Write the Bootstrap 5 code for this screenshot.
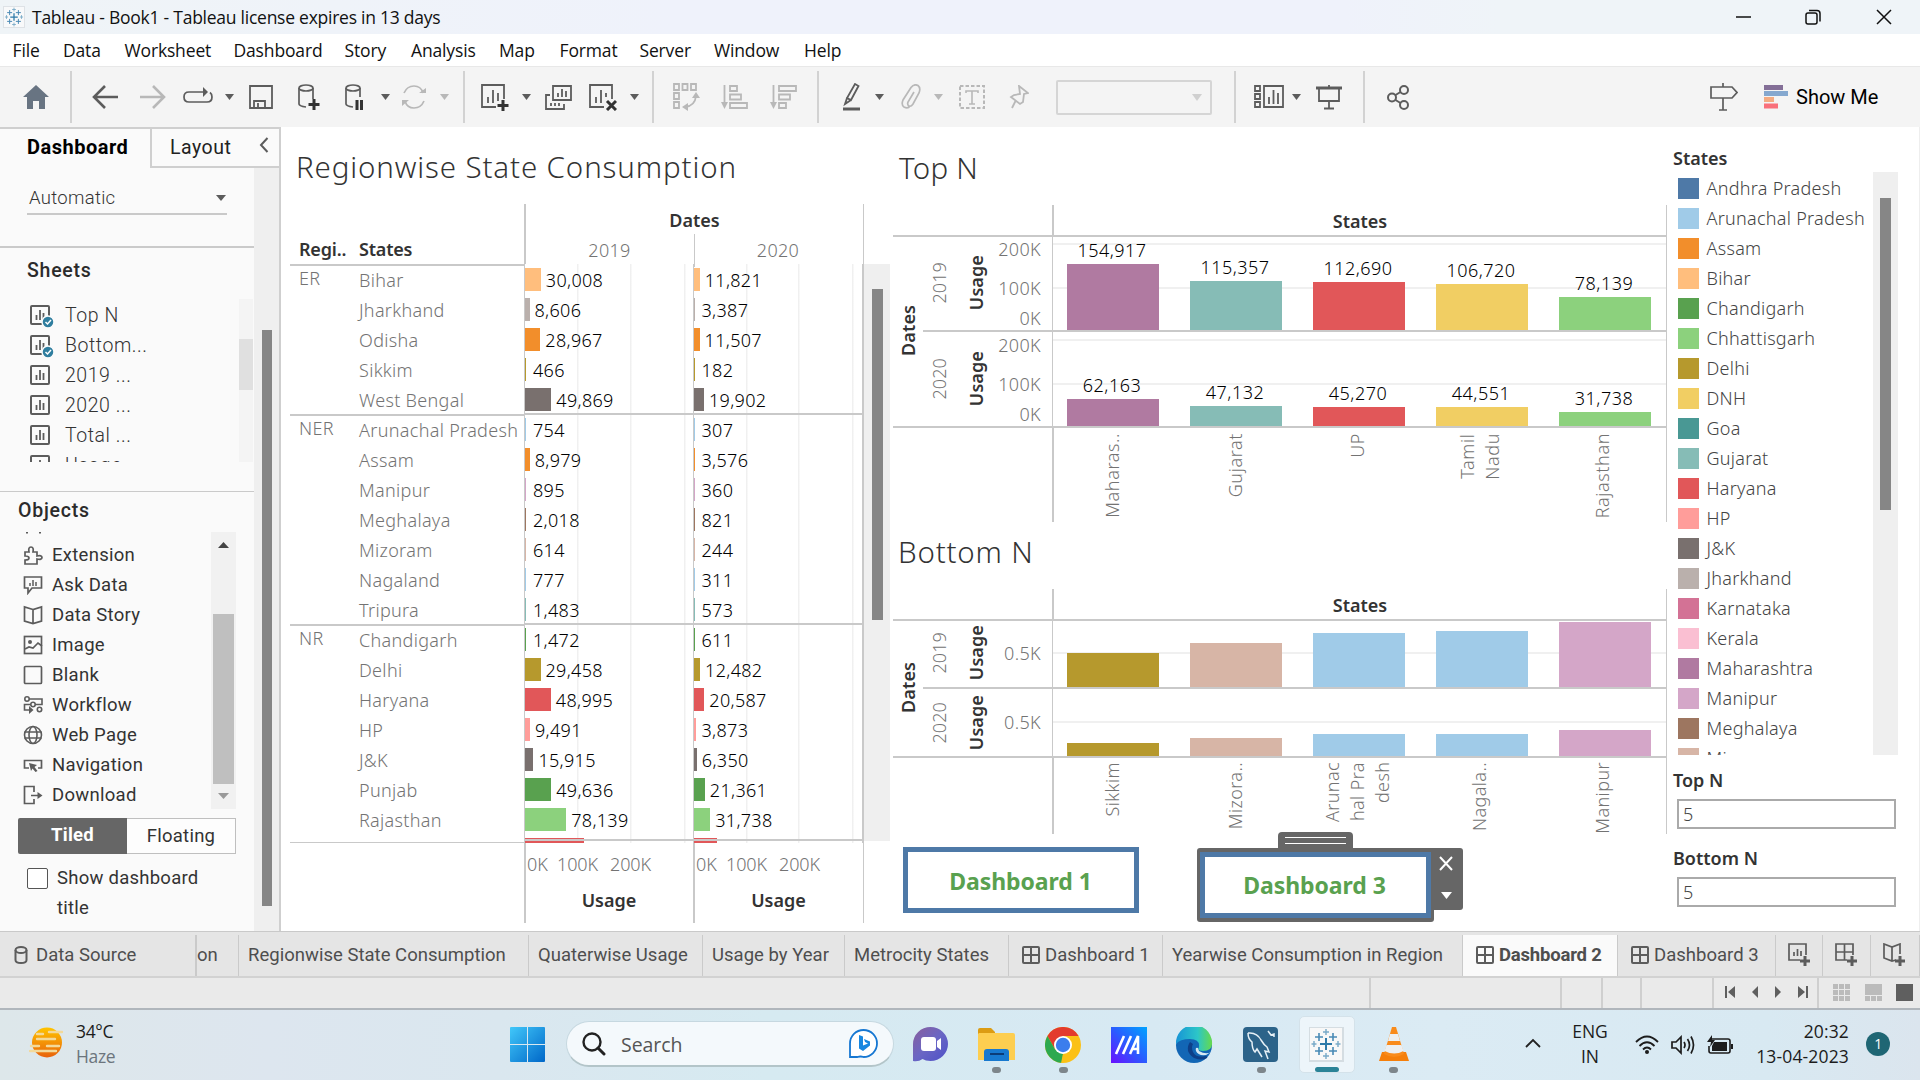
<!DOCTYPE html>
<html lang="en">
<head>
<meta charset="utf-8">
<title>Tableau - Book1</title>
<link rel="stylesheet" href="https://cdn.jsdelivr.net/npm/bootstrap@5.3.0/dist/css/bootstrap.min.css">
<script src="https://cdn.jsdelivr.net/npm/bootstrap@5.3.0/dist/js/bootstrap.bundle.min.js"></script>
<style>
:root{--ln:#c9c9c9;--ink:#333;--dim:#737373;--ic:#5c5c5c;--off:#b8b8b8}
body{width:1920px;height:1080px;overflow:hidden;font-family:"Noto Sans","Open Sans",sans-serif;font-size:18px;line-height:30px;color:var(--ink);background:#fff}
svg{display:block;fill:none;stroke:var(--ic);stroke-width:2}
b{font-weight:600}
.segoe{font-family:"Open Sans",sans-serif}
.benton{font-family:Roboto,sans-serif}
.titlebar{height:34px;background:linear-gradient(90deg,#eff4f7,#eff2fb 35%,#eff2fb 70%,#eff4f8 78%);color:#111;padding-left:3px}
.titlebar span{font-size:17.5px;letter-spacing:-.25px;margin-left:-1px}
.win{display:grid;grid-template-columns:69px 71px 44px;margin-left:auto}
.win svg{stroke:#111;stroke-width:1.5}
.menus{height:32px;display:grid;grid-template-columns:50.5px 61.5px 109px 111px 66.5px 88px 60.5px 80px 74.5px 90px 60px;padding-left:12.5px;color:#111;font-size:17.5px;letter-spacing:-.15px;line-height:33px}
.tools{height:61px;background:#f4f4f4;border-top:1px solid #e8e8e8;display:grid;padding-left:23px;
grid-template-columns:48px 21px 48px 43px 42px 24px 49px 47px 36px 20px 39px 24px 17px 41px 23px 44px 41px 23px 20px 48px 49px 48px 25px 32px 26px 33px 25px 50px 47px 179px 19px 38px 24px 48px 23px 323px 54px 32px 90px;align-items:center}
.tools svg{flex:none}
.tools i.sep{width:2px;height:52px;background:#d2d2d2;margin-left:-1px}
.tools .off{stroke:var(--off)}
.tools .fillc{fill:var(--ic);stroke:none}.tools .fillo{fill:var(--off);stroke:none}
.combo{width:156px;height:35px;border:2px solid #d5d5d5;border-radius:2px}
#showme{font-size:20px;letter-spacing:0}
.workspace{height:804px}
/* side pane */
.side{width:281px;background:#fafafa;border-top:2px solid #cfcfcf;border-right:2px solid #cfcfcf}
.stabs{height:39px;line-height:36px}
.stabs .on{width:150px;padding-left:27px;color:#000;font-weight:700;font-size:20px;letter-spacing:.5px;line-height:37px}
.stabs .off2{width:129px;border-left:2px solid #cfcfcf;border-bottom:2px solid #cfcfcf;padding-left:18px;color:#222;font-size:19.5px;letter-spacing:.5px;line-height:38px}
#sidebody{height:763px}
.scol{width:254px}
.outerbar{width:25px;background:#efefef;padding-top:162px}
.outerbar div{width:10px;height:576px;background:#868686;margin-left:8px}
.sizebox{width:200px;height:38px;margin:9px 0 0 27px;border-bottom:2px solid #c9c9c9;padding:6px 0 0 2px;font-size:18.5px;font-weight:300;letter-spacing:.3px}
.sizebox svg{margin-right:1px}
.sec1{height:246px;margin-top:31px;border-top:2px solid #cacaca;border-bottom:1px solid #cacaca}
.sec1 h6,.sec2 h6{font-size:19.5px;font-weight:500;letter-spacing:.75px;line-height:30px;color:#2b2b2b;margin:0}
.sec1 h6{padding:8px 0 0 27px}
.sheets{height:163px;margin-top:13px;overflow:hidden}
.sheets .it{height:30px;padding-left:30px;gap:10px;font-size:19.5px;font-weight:300;letter-spacing:.55px;position:relative;top:1px}
.sheets .it span{margin-top:2px}
.sheets .trk{width:14px;margin-right:1px;background:#f4f4f4;padding-top:40px}
.sheets .trk div{height:51px;background:#e0e0e0}
.sec2 h6{padding:4px 0 0 18px}
.objs{height:277px;margin-top:6px}
.objs .it{height:30px;padding-left:23px;gap:9px;font-size:18.5px;letter-spacing:.28px;position:relative;top:1px}
.objs .it svg,.sheets .it svg{flex:none}
.objs .trk{width:25px;margin-right:18px;background:#f1f1f1}
.objs .trk .th{width:21px;height:170px;background:#bfbfbf;margin:0 2px}
.seg{width:218px;height:36px;margin:9px 0 0 18px;line-height:35px;font-size:18.5px;letter-spacing:.25px;border-radius:2px}
.seg .a{width:109px;background:#666;color:#fff;font-weight:700;border-radius:2px 0 0 2px}
.seg .b{width:109px;border:1px solid #bfbfbf;border-left:0;background:#fdfdfd}
.chk{margin:9px 0 0 27px;gap:9px;font-size:18.5px;letter-spacing:.25px}
.chk .bx{width:21px;height:21px;border:1.5px solid #555;border-radius:2px;background:#fff;margin-top:5px}
/* text table */
.tv{width:610px;padding-left:9px}
.ttl{font-size:29.5px;font-weight:300;line-height:40px;letter-spacing:.87px}
.tv .ttl{padding:20px 0 0 6px;height:77px}
.thead1{height:60px}
.thead1 .l{width:234px;padding:30px 0 0 9px}
.thead1 .l b{display:inline-block;width:60px;font-weight:600;letter-spacing:-.2px}
.thead1 .r{width:340px;border-left:2px solid var(--ln);border-right:1px solid var(--ln)}
#dh{line-height:32px;height:30px}
.yr{color:var(--dim);font-weight:300;width:168px;text-align:center;line-height:33px;letter-spacing:.3px;padding-right:1px}
.yr+.yr{border-left:1px solid var(--ln)}
.tbody1{height:579px;width:574px;overflow:hidden;position:relative}
.tbody1 .rw{height:30px;line-height:32px}
.tbody1 .l{width:234px;padding-left:9px;color:var(--dim);font-weight:300;letter-spacing:.32px}
.tbody1 .l span{display:inline-block;width:60px}
.tbody1 .l span.rg{position:relative;top:-2px}
.rw.first .l{border-top:2px solid var(--ln);line-height:29px}
.pn{width:168.5px;padding-top:4px;border-left:1px solid var(--ln);color:#000;letter-spacing:.32px;font-weight:300;line-height:25px;background:linear-gradient(#f0f0f0,#f0f0f0) 52px 0/1.5px 100% no-repeat,linear-gradient(#f0f0f0,#f0f0f0) 104.5px 0/1.5px 100% no-repeat,linear-gradient(#f0f0f0,#f0f0f0) 158.5px 0/1.5px 100% no-repeat}
.pn:last-child{width:171.5px;border-right:2px solid var(--ln)}
.pn i{height:23px;flex:none}
.rw.first .pn{border-top:2px solid var(--ln);margin-top:-1px;padding-top:3px;height:31px}
.rw.r0 .pn{border-top-width:1px;padding-top:4px}
.endline{position:absolute;left:234px;right:0;top:575px;height:2px;background:var(--ln)}
.tfoot1{height:80px;width:574px}
.tfoot1 .l{width:234px;border-top:1px solid var(--ln);margin-top:-1px}
.tfoot1 .ax{width:169px;border-left:2px solid var(--ln)}
.tfoot1 .ax:last-child{width:171px;border-right:1px solid var(--ln)}
.tfoot1 .tk{color:var(--dim);font-weight:300;padding:6px 0 0 1px;letter-spacing:-.1px}
.tfoot1 .tk span{display:inline-block}
.tfoot1 .tk span:nth-child(1){width:30px}.tfoot1 .tk span:nth-child(2){width:53px}
.usg{margin-top:6px;line-height:30px;padding-right:1px}
.tvbar{width:26px;height:577px;margin-top:137px;background:#efefef;padding:25px 0 0 8px}
.tvbar div{width:11px;height:331px;background:#868686}
/* bar views */
.bv{width:776px;padding-left:2px}
.bv .ttl{height:78px;padding:21px 0 0 6px;letter-spacing:.2px}
.bv .botn .ttl{letter-spacing:.8px;padding-left:5px}
.bgrid{display:grid;grid-template-columns:30px 33px 42px 54px 615px;width:774px}
.vt{writing-mode:vertical-rl;transform:rotate(180deg);text-align:center;line-height:1.25;letter-spacing:.1px}
.bgrid .ctr{display:flex;align-items:center;justify-content:center}
.bgrid .hl{box-shadow:0 2px 0 var(--ln)}
.bgrid .dts{grid-row:2/4;grid-column:1}
.bgrid .yy{grid-column:2;color:var(--dim);font-weight:300}
.bgrid .us{padding-right:2px}
.bgrid .foot4{grid-column:1/5}
.bgrid .axl{grid-column:4}.bgrid .plot{grid-column:5}
.topn{height:384px}.botn{height:324px}
.sthead{border-left:2px solid var(--ln);border-right:1px solid var(--ln);height:30px;text-align:center;line-height:33px}
.plot{position:relative;border:1px solid var(--ln);border-bottom:2px solid var(--ln);border-top:0;display:flex;align-items:flex-end}
.plot.p1{border-top:2px solid var(--ln)}
.plot .gl{position:absolute;left:0;right:0;height:2px;background:#f0f0f0}
.plot .cl{width:123px;flex:none;padding-left:14px;z-index:1;font-weight:300;color:#000}
.plot .cl:last-of-type{width:120px}
.plot .cl span{display:block;width:92px;text-align:center;line-height:24px;letter-spacing:.5px;font-size:18px;margin-bottom:2px;position:relative;left:-1px;white-space:nowrap}
.plot .cl i{display:block;width:92px}
.axl{position:relative;color:var(--dim);font-weight:300;text-align:right;letter-spacing:.35px}
.axl span{position:absolute;right:11px;line-height:20px}
.lnb{border-bottom:2px solid var(--ln)}
.cats{border-left:2px solid var(--ln);border-right:1px solid var(--ln);display:flex;color:var(--dim)}
.cats div{width:123px;display:flex;justify-content:center;font-weight:300;padding-right:5px}
.cats .vt{text-align:end;line-height:25px;letter-spacing:.6px;margin-top:5px;align-self:flex-start}
.botn .cats .vt{letter-spacing:.4px;margin-top:4px}
.btns{padding:12px 0 0 10px}
.nav1{width:236px;height:66px;border:5px solid #4e79a7;background:#fff;color:#59a14f;font-weight:700;font-size:23px;text-align:center;line-height:58px;letter-spacing:-.05px;padding-right:1px}
.selwrap{position:relative;width:237px;height:74px;background:#666;padding:4px 3px;border-radius:3px;margin:1px 0 0 58px}
.selwrap .nav1{width:231px;line-height:56px;padding-right:2px}
.grip{position:absolute;left:81px;top:-16px;width:75px;height:17px;background:#666;border-radius:4px 4px 0 0;padding:5px 7px}
.grip div{height:7px;border-top:1.5px solid #fff;border-bottom:1.5px solid #fff}
.selmenu{position:absolute;left:234px;top:0;width:32px;height:62px;background:#666;border-radius:0 3px 3px 0;padding-left:6px}
/* legend */
.lg{width:250px;padding:16px 0 0 6px;border-right:1px solid #eee}
.lgl{height:583px;margin-top:-1px;overflow:hidden}
.lgl .it{height:30px;gap:8px;padding-left:5px;color:#444;letter-spacing:.27px;font-weight:300;line-height:30px;position:relative;top:1px;left:-.5px}
.lgl .it i{width:21px;height:21px}
.lgl .trk{width:25px;background:#efefef;margin-right:21px;padding:26px 0 0 7px}
.lgl .trk div{width:11px;height:312px;background:#868686}
.parh{height:44px;line-height:50px}.parh2{margin-top:4px}
.par{width:219px;height:30px;margin-left:4px;border:2px solid #aaa;padding-left:4px;line-height:26px;color:#444;font-weight:300}
/* sheet tabs */
.shtabs{height:45px;border-top:1px solid #c9c9c9;background:#e5e5e5;display:grid;grid-template-columns:197px 42px 290px 174px 142px 164px 154px 300px 155px 158px 47px 48px 49px;color:#4e4e4e;font-size:18.5px;letter-spacing:.02px}
.shtabs>div{border-right:1px solid #cacaca;padding-left:9px;display:flex;align-items:center;gap:5px;white-space:nowrap;margin-top:3px;line-height:38px;padding-bottom:2px}
.shtabs>div.act{background:#fafafa;font-weight:700;letter-spacing:-.2px}
.shtabs svg{flex:none}
.shtabs>.ds{padding-left:14px;gap:8px;border-right-width:2px}
.shtabs>.dsh{padding-left:13px}.shtabs>.nw{padding-left:12px}
.stat{height:34px;background:#eaeaea;border-top:2px solid #d2d2d2;border-bottom:2px solid #b0b6bc;display:grid;grid-template-columns:1371px 191px 41px 39px 72px 105px 101px}
.stat>div{border-right:2px solid #cfcfcf;padding-bottom:2px}.stat svg{fill:#5f5f5f;stroke:none}
.stat .views{padding:0 7px 2px 14px}
.task{height:70px;background:linear-gradient(90deg,#dde7ea,#dde6ef 14%,#dae7ef 26%,#d6eaf1 40%,#d7e9f3 60%,#dbebf4 75%,#d8e9f2 92%,#dbe5ee);display:grid;grid-template-columns:47px 434px 56px 347px 65px 67px 66px 65px 67px 66px 66px 150px 47px 63px 36px 36px 36px 123px 50px;padding-left:29px;color:#1c1c1c;line-height:25px;font-size:17.5px;letter-spacing:-.35px}
.task>div{position:relative;padding-top:17px}
.srch{width:328px;height:46px;margin-top:-6px;border-radius:23px;background:#f4f9fc;border:1px solid #c6d8e0;border-bottom:2px solid #b3c5c9;padding:0 14px 0 15px;font-size:19.5px;color:#555;letter-spacing:-.05px}
.srch span{margin-left:15px;padding-top:1px}
.task .dot{position:absolute;left:14px;top:57px;width:9px;height:6px;border-radius:3px;background:#7d868b}
.task svg{stroke:none}
.actv{position:absolute;left:-10px;top:6px;width:56px;height:57px;border-radius:5px;background:#edf5fa;border:1px solid #d4e2ea}
.actv::after{content:"";position:absolute;left:15px;bottom:0;width:24px;height:5px;border-radius:3px;background:#2a8397}
.task>.wx,.task>.lang,.task>.clock{padding-top:9px}
.task>.lang{text-align:center;margin-left:-12px;width:60px;letter-spacing:-.1px}
.task>.chv{padding-top:28px}
.task>.clock{margin-right:17px;letter-spacing:.15px}
.bdg{width:24px;height:24px;border-radius:50%;background:#1f6674;color:#fff;font-size:14px;text-align:center;line-height:24px;margin-top:5px}
</style>
</head>
<body class="d-flex flex-column">
<svg width="0" height="0" class="position-absolute">
<defs>
<symbol id="tabl" viewBox="0 0 32 32"><path d="M16 10v12M10 16h12" stroke="#2d79a8" stroke-width="2"/><path d="M9 5v8M5 9h8M23 5v8M19 9h8M9 19v8M5 23h8M23 19v8M19 23h8" stroke="#4a8ab5" stroke-width="1.6"/><path d="M16 1v6M13 4h6M16 25v6M13 28h6M4 13v6M1.500 16h5M28 13v6M25.500 16h5" stroke="#78a9c7" stroke-width="1.4"/></symbol>
<symbol id="sheet" viewBox="0 0 20 20"><rect x="1" y="1" width="18" height="18" rx="1"/><path d="M6.500 10v5M10 5v10M13.500 8v7" stroke-width="1.8"/></symbol>
<symbol id="dash" viewBox="0 0 18 18"><rect x="1" y="1" width="16" height="16" rx="1"/><path d="M9 1v16M1 9h16"/></symbol>
</defs></svg>

<header class="titlebar segoe d-flex align-items-center">
<svg width="22" height="22" class="me-2 bg-light border"><use href="#tabl"/></svg><span>Tableau - Book1 - Tableau license expires in 13 days</span>
<div class="win"><svg width="16" height="16"><path d="M0 8h15"/></svg><svg width="16" height="16"><rect x="1" y="4" width="11" height="11" rx="2"/><path d="M4 1.500h8q3 0 3 3v8"/></svg><svg width="16" height="16"><path d="M1 1l14 14M15 1L1 15"/></svg></div>
</header>
<nav class="menus segoe"><span>File</span><span>Data</span><span>Worksheet</span><span>Dashboard</span><span>Story</span><span>Analysis</span><span>Map</span><span>Format</span><span>Server</span><span>Window</span><span>Help</span></nav>

<div class="tools">
<svg width="26" height="24"><path d="M13 0L26 12h-4v12h-6v-8h-6v8H4V12H0z" fill="#687482" stroke="none"/></svg>
<i class="sep"></i>
<svg width="26" height="24"><path d="M26 12H2M13 1L2 12l11 11" stroke-width="2.600"/></svg>
<svg width="26" height="24" class="off"><path d="M0 12h24M13 1l11 11-11 11" stroke-width="2.600"/></svg>
<svg width="30" height="22"><path d="M23 6H6q-5 0-5 5t5 5h18q5 0 5-5 0-3-2-4.500" stroke-width="1.700"/><path d="M20 1l5 5-5 5z" class="fillc"/></svg>
<svg width="9" height="6"><path d="M0 0h9L4.500 6z" class="fillc"/></svg>
<svg width="24" height="24"><path d="M1 1h22v22H1zM5 23v-7h11v7M9 18v5" stroke-width="1.800"/></svg>
<svg width="24" height="26"><ellipse cx="8" cy="4" rx="7" ry="3" stroke-width="1.700"/><path d="M1 4v16q0 2 7 3M15 4v11" stroke-width="1.700"/><path d="M16 15v11M10.500 20.500h11" stroke="#333" stroke-width="3"/></svg>
<svg width="20" height="26"><ellipse cx="8" cy="4" rx="7" ry="3" stroke-width="1.700"/><path d="M1 4v16q0 2 7 3M15 4v9" stroke-width="1.700"/><path d="M12 16v10M16.500 16v10" stroke="#333" stroke-width="3"/></svg>
<svg width="9" height="6"><path d="M0 0h9L4.500 6z" class="fillc"/></svg>
<svg width="26" height="24" class="off"><path d="M3 8Q6 1 13 1t9 7M23 16q-3 7-10 7T4 16" stroke-width="1.700"/><path d="M18 8h7V3zM8 15H1v6z" class="fillo"/></svg>
<svg width="9" height="6"><path d="M0 0h9L4.500 6z" class="fillo"/></svg>
<i class="sep"></i>
<svg width="28" height="27"><path d="M15 23H1V1h22v14M7 13v6M12 6v13M17 9v8" stroke-width="1.800"/><path d="M22 16v11M16.500 21.500h11" stroke="#333" stroke-width="3"/></svg>
<svg width="9" height="6"><path d="M0 0h9L4.500 6z" class="fillc"/></svg>
<svg width="27" height="25"><path d="M8 1h18v14H8zM5 10H1v14h18v-5M13 8v4M17 4v8M21 6v6M6 18v3M10 18v3M14 18v3" stroke-width="1.800"/></svg>
<svg width="28" height="27"><path d="M15 23H1V1h22v14M7 13v6M12 6v13M17 9v4" stroke-width="1.800"/><path d="M18 17l9 9M27 17l-9 9" stroke="#333" stroke-width="3"/></svg>
<svg width="9" height="6"><path d="M0 0h9L4.500 6z" class="fillc"/></svg>
<i class="sep"></i>
<svg width="27" height="28" class="off"><path d="M1 1h5v6H1zM9.500 1h5v6h-5zM18 1h5v6h-5zM1 10h5v6H1zM1 19h5v6H1zM12 24q10-1 11-11" stroke-width="1.800"/><path d="M23 9l4 6h-8zM9 24l6-4v8z" class="fillo"/></svg>
<svg width="28" height="25" class="off"><path d="M3.500 0v20M9 1h7v5H9zM9 9.500h11v5H9zM9 18h17v5H9z" stroke-width="1.800"/><path d="M0 17h7l-3.500 7z" class="fillo"/></svg>
<svg width="28" height="25" class="off"><path d="M3.500 0v20M9 1h17v5H9zM9 9.500h11v5H9zM9 18h7v5H9z" stroke-width="1.800"/><path d="M0 17h7l-3.500 7z" class="fillo"/></svg>
<i class="sep"></i>
<svg width="18" height="28"><path d="M12 1l3.500 2L8 17l-4-2zM4 15l-2 6 6-4" stroke-width="1.800"/><path d="M0 26h17" stroke-width="3"/></svg>
<svg width="9" height="6"><path d="M0 0h9L4.500 6z" class="fillc"/></svg>
<svg width="20" height="26" class="off"><path d="M13 8L7 18q-1 3 1 4t4-2l6-11q2-5-1-7.500-4-2-7 2L2 16q-2 5 1 7 4 2 6-1" stroke-width="1.700"/></svg>
<svg width="9" height="6"><path d="M0 0h9L4.500 6z" class="fillo"/></svg>
<svg width="26" height="25" class="off"><path d="M1 1h24v22H1z" stroke-dasharray="3.500 2"/><path d="M7 8V6h12v2M13 6v13M10 19h6" stroke-width="1.600"/></svg>
<svg width="20" height="25" class="off"><path d="M10 1l9 7-4 1-1 8-3 2-9-7 3-2 6-1zM7 15l-4 8" stroke-width="1.800"/></svg>
<div class="combo d-flex align-items-center justify-content-end pe-2"><svg width="10" height="7"><path d="M0 0h10L5 7z" fill="#d0d0d0" stroke="none"/></svg></div>
<i class="sep"></i>
<svg width="30" height="24"><path d="M1 1h5v5H1zM1 9h5v5H1zM1 17h5v5H1zM10 1h19v21H10zM15 12v7M19.500 5v14M24 8v11" stroke-width="1.800"/></svg>
<svg width="9" height="6"><path d="M0 0h9L4.500 6z" class="fillc"/></svg>
<svg width="26" height="25"><path d="M0 3h26" stroke-width="3"/><path d="M13 0v3M3 3v13h20V3M13 16v7M8 23.500h10" stroke-width="1.800"/></svg>
<i class="sep"></i>
<svg width="23" height="25"><circle cx="5" cy="12.500" r="4"/><circle cx="17" cy="5" r="4"/><circle cx="17" cy="20" r="4"/><path d="M8.500 10l5-3M8.500 15l5 3"/></svg>
<svg width="28" height="28"><path d="M1 4h21l5 5.500-5 5.500H1zM13 0v4M13 15v12M9 27h8" stroke-width="1.700"/></svg>
<svg width="25" height="24"><g stroke="none"><path d="M0 0h19v5H0z" fill="#846f97"/><path d="M0 6h24v5H0z" fill="#85a8cf"/><path d="M0 12h10v5H0z" fill="#f4ab82"/><path d="M0 18.500h14v5H0z" fill="#f9707b"/></g></svg>
<span class="benton text-black text-nowrap" id="showme">Show Me</span>
</div>

<main class="workspace d-flex">
<aside class="side benton flex-shrink-0">
 <div class="stabs d-flex"><div class="on">Dashboard</div><div class="off2 d-flex justify-content-between pe-2">Layout<svg width="12" height="16" class="mt-2"><path d="M8.500 1L2 8l6.500 7"/></svg></div></div>
 <div class="d-flex" id="sidebody">
 <div class="scol">
  <div class="sizebox d-flex justify-content-between align-items-center"><span>Automatic</span><svg width="10" height="6"><path d="M0 0h10L5 6z" fill="#5c5c5c" stroke="none"/></svg></div>
  <div class="sec1"><h6>Sheets</h6>
   <div class="sheets d-flex justify-content-between"><div id="sheetlist"></div><div class="trk"><div></div></div></div>
  </div>
  <div class="sec2"><h6>Objects</h6>
   <div class="objs d-flex justify-content-between overflow-hidden"><div>
    <svg width="18" height="7" class="ms-4"><path d="M3 0v1.500M16 0v1.500"/></svg>
    <div class="it d-flex align-items-center"><svg width="20" height="20"><path d="M2 7h4q-1-5 2-5t2 5h4v4q5-1 5 1.500t-5 1.500v5H2v-4q4 0 4-2t-4-2z" stroke-width="1.700"/></svg>Extension</div>
    <div class="it d-flex align-items-center"><svg width="20" height="20"><path d="M1.500 2h17v11H9l-4 5v-5H1.500z" stroke-width="1.700"/><path d="M7 8v3M10 5v6M13 7v4" stroke-width="1.500"/></svg>Ask Data</div>
    <div class="it d-flex align-items-center"><svg width="20" height="20"><path d="M10 4.500v14M10 4.500L1.500 2v14l8.500 2.500 8.500-2.500V2z" stroke-width="1.700"/></svg>Data Story</div>
    <div class="it d-flex align-items-center"><svg width="20" height="20"><rect x="1.500" y="1.500" width="17" height="17" stroke-width="1.700"/><circle cx="7" cy="7" r="2" fill="#5c5c5c" stroke="none"/><path d="M2 14l4-2 4 1 5-5 4 3" stroke-width="1.700"/></svg>Image</div>
    <div class="it d-flex align-items-center"><svg width="20" height="20"><rect x="1.500" y="1.500" width="17" height="17" rx="1" stroke-width="1.700"/></svg>Blank</div>
    <div class="it d-flex align-items-center"><svg width="20" height="20"><g stroke-width="1.600"><circle cx="4" cy="4" r="2.200"/><circle cx="10" cy="9.500" r="2.200"/><circle cx="16.500" cy="14.500" r="2.200"/><path d="M6 4h13v5.500h-7M8 9.500H1.500V15H7"/></g><path d="M6 11l4.500 4L6 19z" fill="#5c5c5c" stroke="none"/></svg>Workflow</div>
    <div class="it d-flex align-items-center"><svg width="20" height="20"><g stroke-width="1.600"><circle cx="10" cy="10" r="8.500"/><ellipse cx="10" cy="10" rx="4" ry="8.500"/><path d="M1.500 7h17M1.500 13h17"/></g></svg>Web Page</div>
    <div class="it d-flex align-items-center"><svg width="20" height="20"><path d="M6 13H1.500V5.500h17V13H15" stroke-width="1.700"/><path d="M6 8l8 2-2.500 2 3 4-2 1-3-3.500L8 16z" fill="#5c5c5c" stroke="none"/></svg>Navigation</div>
    <div class="it d-flex align-items-center"><svg width="20" height="20"><path d="M11 7V1.500H1.500v17H11V14M8 10.500h8" stroke-width="1.700"/><path d="M14.500 7l5 3.500-5 3.500z" fill="#5c5c5c" stroke="none"/></svg>Download</div>
   </div><div class="trk"><svg width="25" height="82"><path d="M7 16h11l-5.500-6z" fill="#444" stroke="none"/></svg><div class="th"></div><svg width="25" height="25"><path d="M7 9h11l-5.500 6z" fill="#999" stroke="none"/></svg></div></div>
   <div class="seg d-flex text-center"><div class="a">Tiled</div><div class="b">Floating</div></div>
   <div class="chk d-flex"><div class="bx flex-shrink-0"></div><div>Show dashboard<br>title</div></div>
  </div>
 </div>
 <div class="outerbar"><div></div></div>
 </div>
</aside>

<section class="tv flex-shrink-0 d-flex">
 <div>
  <div class="ttl">Regionwise State Consumption</div>
  <div class="thead1 d-flex"><div class="l text-nowrap"><b>Regi..</b><b>States</b></div>
   <div class="r"><div class="text-center" id="dh"><b>Dates</b></div><div class="d-flex"><div class="yr">2019</div><div class="yr">2020</div></div></div></div>
  <div class="tbody1" id="tb"></div>
  <div class="tfoot1 d-flex"><div class="l"></div>
   <div class="ax"><div class="tk text-nowrap"><span>0K</span><span>100K</span><span>200K</span></div><div class="text-center usg"><b>Usage</b></div></div>
   <div class="ax"><div class="tk text-nowrap"><span>0K</span><span>100K</span><span>200K</span></div><div class="text-center usg"><b>Usage</b></div></div></div>
 </div>
 <div class="tvbar"><div></div></div>
</section>

<section class="bv flex-shrink-0" id="bars"></section>

<section class="lg flex-grow-1">
 <b class="d-block">States</b>
 <div class="lgl d-flex justify-content-between"><div id="lgd"></div><div class="trk"><div></div></div></div>
 <b class="d-block parh">Top N</b><div class="par">5</div>
 <b class="d-block parh parh2">Bottom N</b><div class="par">5</div>
</section>
</main>

<div class="shtabs benton">
<div class="ds"><svg width="14" height="18"><ellipse cx="7" cy="4" rx="5.500" ry="3"/><path d="M1.500 4v10q0 3 5.500 3t5.500-3V4"/></svg>Data Source</div>
<div class="ps-0">on</div><div>Regionwise State Consumption</div><div>Quaterwise Usage</div><div>Usage by Year</div><div>Metrocity States</div>
<div class="dsh"><svg width="18" height="18"><use href="#dash"/></svg>Dashboard 1</div><div>Yearwise Consumption in Region</div>
<div class="dsh act"><svg width="18" height="18"><use href="#dash"/></svg>Dashboard 2</div><div class="dsh"><svg width="18" height="18"><use href="#dash"/></svg>Dashboard 3</div>
<div class="nw"><svg width="23" height="23"><path d="M12 17H1V1h17v11M6 9v4M9.500 6v7M13 8v5" stroke-width="1.700"/><path d="M17 13v10M12 18h10" stroke-width="3"/></svg></div>
<div class="nw"><svg width="23" height="23"><path d="M12 17H1V1h17v11M9.500 1v16M1 9h17" stroke-width="1.700"/><path d="M17 13v10M12 18h10" stroke-width="3"/></svg></div>
<div class="nw"><svg width="23" height="23"><path d="M13 17l-4 1-8-3V1l8 3 8-3v10M9 4v14" stroke-width="1.700"/><path d="M17 13v10M12 18h10" stroke-width="3"/></svg></div>
</div>
<div class="stat"><div></div><div></div><div></div><div></div><div></div>
<div class="d-flex align-items-center justify-content-between px-2"><svg width="14" height="12"><path d="M3 0h2v12H3zM13 0v12L6 6z"/></svg><svg width="7" height="12"><path d="M6 0v12L0 6z"/></svg><svg width="7" height="12"><path d="M1 0v12l6-6z"/></svg><svg width="12" height="12"><path d="M9 0h2v12H9zM1 0v12l7-6z"/></svg></div>
<div class="d-flex align-items-center justify-content-between border-0 views"><svg width="17" height="17"><path d="M0 0h5v5H0zM6 0h5v5H6zM12 0h5v5h-5zM0 6h5v5H0zM6 6h5v5H6zM12 6h5v5h-5zM0 12h5v5H0zM6 12h5v5H6zM12 12h5v5h-5z" fill="#bbb"/></svg><svg width="17" height="17"><path d="M0 0h17v11H0zM0 12h5v5H0zM6 12h5v5H6zM12 12h5v5h-5z" fill="#bbb"/></svg><svg width="17" height="17"><path d="M0 0h17v17H0z"/></svg></div></div>

<footer class="task segoe">
<div><svg width="35" height="32"><defs><linearGradient id="sun" x2="0" y2="1"><stop stop-color="#ffc400"/><stop offset="1" stop-color="#e8620c"/></linearGradient></defs><circle cx="18" cy="15.500" r="15" fill="url(#sun)"/><path d="M8 7h6M20 5h13M8 12h18M2 19h8M18 19h12M1 24h26" stroke="#f3d99a" stroke-width="2.400" stroke-linecap="round"/></svg></div>
<div class="wx"><div>34°C</div><div class="text-secondary">Haze</div></div>
<div><svg width="35" height="35"><defs><linearGradient id="w" x2="1" y2="1"><stop stop-color="#41c8fa"/><stop offset="1" stop-color="#0067c8"/></linearGradient></defs><path d="M0 1q0-1 1-1h16v17H0zM18 0h16q1 0 1 1v16H18zM0 18h17v17H1q-1 0-1-1zM18 18h17v16q0 1-1 1H18z" fill="url(#w)"/></svg></div>
<div><div class="srch d-flex align-items-center"><svg width="24" height="24"><circle cx="10" cy="10" r="8.500" stroke="#222" stroke-width="2.400"/><path d="M16 16l6 6" stroke="#222" stroke-width="3" stroke-linecap="round"/></svg><span>Search</span><svg width="31" height="31" class="ms-auto"><path d="M2 29V15.500A13.500 13.500 0 1 1 15.500 29q-3-1-6 0z" stroke="#1677d2" stroke-width="1.800" fill="#fff"/><path d="M11 7l4 1.500v9l5-2-3-1.500-1-3 6 2.500v4L15 23l-4-2.500z" fill="#1787e0"/></svg></div></div>
<div><svg width="35" height="35"><defs><linearGradient id="ch" x2="1" y2="1"><stop stop-color="#8a5f9c"/><stop offset=".5" stop-color="#6a66c4"/><stop offset="1" stop-color="#4d50c8"/></linearGradient></defs><path d="M0 34V17A17.500 17 0 1 1 17.500 34q-5 0-8-2-4 3-9.500 2z" fill="url(#ch)"/><rect x="8" y="10" width="15" height="14" rx="3" fill="#fff"/><path d="M24 14l4-3v12l-4-3z" fill="#fff"/></svg></div>
<div><svg width="37" height="35"><path d="M0 3q0-2 2-2h11l4 4v8H0z" fill="#dc9c13"/><path d="M1 6h34q2 0 2 2v25H0V7z" fill="#fdce50"/><path d="M6 34V25q0-3 3-3h19q3 0 3 3v9z" fill="#1779cf"/><path d="M12 27h14" stroke="#0b3c77" stroke-width="2"/></svg><i class="dot"></i></div>
<div><svg width="36" height="36" viewBox="0 0 36 36"><circle cx="18" cy="18" r="18" fill="#fbc116"/><path d="M2.400 9A18 18 0 0 1 33.600 9H18l-7.800 13.500z" fill="#e33b2e"/><path d="M2.400 9l7.800 13.500L18 27l-1 9A18 18 0 0 1 2.400 9z" fill="#2da94f"/><path d="M18 27l8-4.500-8 13.500h-2z" fill="#fbc116"/><circle cx="18" cy="18" r="9" fill="#fff"/><circle cx="18" cy="18" r="7.200" fill="#3b7ded"/></svg><i class="dot"></i></div>
<div><svg width="36" height="36"><defs><linearGradient id="as" x1="1" x2="0" y2="1"><stop stop-color="#00a3ff"/><stop offset=".5" stop-color="#2a5cff"/><stop offset="1" stop-color="#6a10ff"/></linearGradient></defs><path d="M0 0h36v36H0z" fill="url(#as)"/><path d="M5 27l8-18M12 27l8-18M19 27l8-18v18M22 22h5" stroke="#fff" stroke-width="2.600"/></svg></div>
<div><svg width="37" height="36"><defs><linearGradient id="ed" x2="1" y2="0"><stop stop-color="#1794d6"/><stop offset=".6" stop-color="#2cc6c8"/><stop offset="1" stop-color="#66da4c"/></linearGradient></defs><circle cx="18" cy="18" r="18" fill="#1266b5"/><path d="M0 17A18 18 0 0 1 36 15q1 9-9 9-6 0-4-4 1-8-9-8Q4 12 0 17z" fill="url(#ed)"/><path d="M14 15q-6 9 4 16 8 3 13 0 1-2-2-2-9 2-12-4-2-5 0-8z" fill="#0d3f88"/><path d="M22 21q-3-1-2 3 2 5 10 4l5-3q-5 3-12-1z" fill="#d7e9f3"/></svg></div>
<div><svg width="35" height="35"><rect width="35" height="35" rx="4" fill="#2c6389"/><path d="M5 6q9-1 13 7 3 5 6 7l2 5-4-1 3 8M5 6q0 6 4 9 0 7 3 10l2-3 5 8M25 4l3 4 3-1v3" stroke="#e6f0f6" stroke-width="1.500"/></svg><i class="dot"></i></div>
<div><div class="actv"></div><svg width="35" height="35" class="position-relative"><rect width="34" height="34" fill="#f8f8f8" stroke="#d5dde2"/><use href="#tabl" x="1" y="1" width="32" height="32"/></svg></div>
<div class="vlc"><svg width="30" height="35" class="ms-1"><path d="M3 25h24l3 9H0z" fill="#f57f0b"/><path d="M13 0h4l8 27q-10 6-20 0z" fill="#f98b1b"/><path d="M11 7h8l2 7H9zM7.500 18h15l2 6q-9 5-19 0z" fill="#eceff1"/></svg><i class="dot"></i></div>
<div class="chv"><svg width="16" height="10"><path d="M1 9l7-7 7 7" stroke="#222" stroke-width="1.800"/></svg></div>
<div class="lang">ENG<br>IN</div>
<div><svg width="24" height="20" class="mt-2"><g stroke="#1c1c1c" stroke-width="1.800" fill="none"><path d="M1 7Q12-4 23 7M4.500 11Q12 3.500 19.500 11M8 14.500q4-4 8 0"/></g><circle cx="12" cy="17" r="2" fill="#1c1c1c"/></svg></div>
<div><svg width="24" height="20" class="mt-2"><g stroke="#1c1c1c" stroke-width="1.700" fill="none"><path d="M1 7h4l5-5v16l-5-5H1zM13 7q2 3 0 6M16.500 4q4 6 0 12M20 1.500q5 8.500 0 17"/></g></svg></div>
<div><svg width="26" height="20" class="mt-2"><path d="M4 4h17q2 0 2 2v10q0 2-2 2H4q-2 0-2-2v-5" stroke="#1c1c1c" stroke-width="1.600"/><path d="M7 7h13v9H5v-5zM24 9h2v5h-2z" fill="#1c1c1c"/><path d="M5 0L0 7h4l-1 5 5-7H5z" fill="#1c1c1c"/></svg></div>
<div class="text-end clock">20:32<br>13-04-2023</div>
<div><div class="bdg">1</div></div>
</footer>

<script>
const C={AndhraP:'#4e79a7',Arun:'#a0cbe8',Assam:'#f28e2b',Bihar:'#ffbe7d',Chd:'#59a14f',Chh:'#8cd17d',Delhi:'#b6992d',DNH:'#f1ce63',Goa:'#499894',Guj:'#86bcb6',Har:'#e15759',HP:'#ff9d9a',JK:'#79706e',Jhar:'#bab0ac',Kar:'#d37295',Ker:'#fabfd2',Mah:'#b07aa1',Man:'#d4a6c8',Meg:'#9d7660',Miz:'#d7b5a6'};
const rows=[['ER','Bihar',30008,11821,C.Bihar],['','Jharkhand',8606,3387,C.Jhar],['','Odisha',28967,11507,C.Assam],['','Sikkim',466,182,C.Delhi],['','West Bengal',49869,19902,C.JK],
['NER','Arunachal Pradesh',754,307,C.Arun],['','Assam',8979,3576,C.Assam],['','Manipur',895,360,C.Man],['','Meghalaya',2018,821,C.Meg],['','Mizoram',614,244,C.Miz],['','Nagaland',777,311,C.Arun],['','Tripura',1483,573,C.Guj],
['NR','Chandigarh',1472,611,C.Chd],['','Delhi',29458,12482,C.Delhi],['','Haryana',48995,20587,C.Har],['','HP',9491,3873,C.HP],['','J&amp;K',15915,6350,C.JK],['','Punjab',49636,21361,C.Chd],['','Rajasthan',78139,31738,C.Chh],['','',112690,45270,C.Har]];
const fmt=n=>n.toLocaleString('en-US');
const pane=(v,c,show)=>{const w=Math.max(v*.000527,1),m=Math.max(5,8-w);return `<div class="pn d-flex"><i style="width:${w.toFixed(1)}px;background:${c};margin-right:${m.toFixed(1)}px"></i>${show?fmt(v):''}</div>`};
document.getElementById('tb').innerHTML=rows.map((r,i)=>`<div class="rw d-flex ${r[0]?'first':''} ${i?'':'r0'}"><div class="l text-nowrap"><span class="rg">${r[0]}</span>${r[1]}</div>${pane(r[2],r[4],r[1])}${pane(r[3],r[4],r[1])}</div>`).join('')+'<div class="endline"></div>';
document.getElementById('lgd').innerHTML=[['Andhra Pradesh',C.AndhraP],['Arunachal Pradesh',C.Arun],['Assam',C.Assam],['Bihar',C.Bihar],['Chandigarh',C.Chd],['Chhattisgarh',C.Chh],['Delhi',C.Delhi],['DNH',C.DNH],['Goa',C.Goa],['Gujarat',C.Guj],['Haryana',C.Har],['HP',C.HP],['J&amp;K',C.JK],['Jharkhand',C.Jhar],['Karnataka',C.Kar],['Kerala',C.Ker],['Maharashtra',C.Mah],['Manipur',C.Man],['Meghalaya',C.Meg],['Mizoram',C.Miz]].map(a=>`<div class="it d-flex align-items-center text-nowrap"><i style="background:${a[1]}"></i>${a[0]}</div>`).join('');
document.getElementById('sheetlist').innerHTML=['Top N','Bottom...','2019 ...','2020 ...','Total ...','Usage ...'].map((t,i)=>`<div class="it d-flex align-items-center"><svg width="25" height="25" viewBox="0 -2 25 25"><use href="#sheet" width="20" height="20"/>${i<2?'<circle cx="18" cy="17" r="6" fill="#2f7e9f" stroke="#fafafa" stroke-width="1.500"/><path d="M15.500 17l2 2 3.500-4" stroke="#fff" stroke-width="1.500"/>':''}</svg><span>${t}</span></div>`).join('');
const view=(title,cls,h,k,cats,p1,p2,cols,grid,ticks,show,ch)=>{
 const plot=(p,n)=>`<div class="plot ${n?'':'p1'}" style="height:${h[n]}px">${grid[n].map(g=>`<div class="gl" style="top:${g}px"></div>`).join('')}${p.map((v,i)=>`<div class="cl">${show?`<span>${fmt(v)}</span>`:''}<i style="height:${(v*k).toFixed(1)}px;background:${cols[i]}"></i></div>`).join('')}</div>`;
 const ax=n=>`<div class="axl lnb">${ticks[n].map(t=>`<span style="top:${t[1]}px">${t[0]}</span>`).join('')}</div>`;
 return `<div class="${cls}"><div class="ttl">${title}</div><div class="bgrid">
 <div class="hl"></div><div class="hl"></div><div class="hl"></div><div class="hl"></div><div class="sthead"><b>States</b></div>
 <div class="ctr lnb dts"><b class="vt">Dates</b></div>
 <div class="ctr lnb yy"><span class="vt">2019</span></div><div class="ctr lnb us"><b class="vt">Usage</b></div>${ax(0)}${plot(p1,0)}
 <div class="ctr lnb yy"><span class="vt">2020</span></div><div class="ctr lnb us"><b class="vt">Usage</b></div>${ax(1)}${plot(p2,1)}
 <div class="foot4"></div><div class="cats" style="height:${ch}px">${cats.map(c=>`<div><span class="vt">${c}</span></div>`).join('')}</div></div></div>`};
document.getElementById('bars').innerHTML=
view('Top N','topn',[97,96],.000428,['Maharas..','Gujarat','UP','Tamil<br>Nadu','Rajasthan'],[154917,115357,112690,106720,78139],[62163,47132,45270,44551,31738],[C.Mah,C.Guj,C.Har,C.DNH,C.Chh],[[6,50],[7,51]],[[['200K',4],['100K',43],['0K',73]],[['200K',3],['100K',42],['0K',72]]],true,94)
+view('Bottom N','botn',[70,69],.0723,['Sikkim','Mizora..','Arunac<br>hal Pra<br>desh','Nagala..','Manipur'],[466,614,754,777,895],[182,244,307,311,360],[C.Delhi,C.Miz,C.Arun,C.Arun,C.Man],[[31],[32]],[[['0.5K',24]],[['0.5K',23]]],false,76)
+`<div class="d-flex btns"><div class="nav1">Dashboard 1</div><div class="selwrap"><div class="nav1">Dashboard 3</div><div class="grip"><div></div></div><div class="selmenu"><svg width="17" height="60"><path d="M3 9l12 13M15 9L3 22" stroke="#fff"/><path d="M4 44h11l-5.500 7z" fill="#fff" stroke="none"/></svg></div></div></div>`;
</script>
</body>
</html>
